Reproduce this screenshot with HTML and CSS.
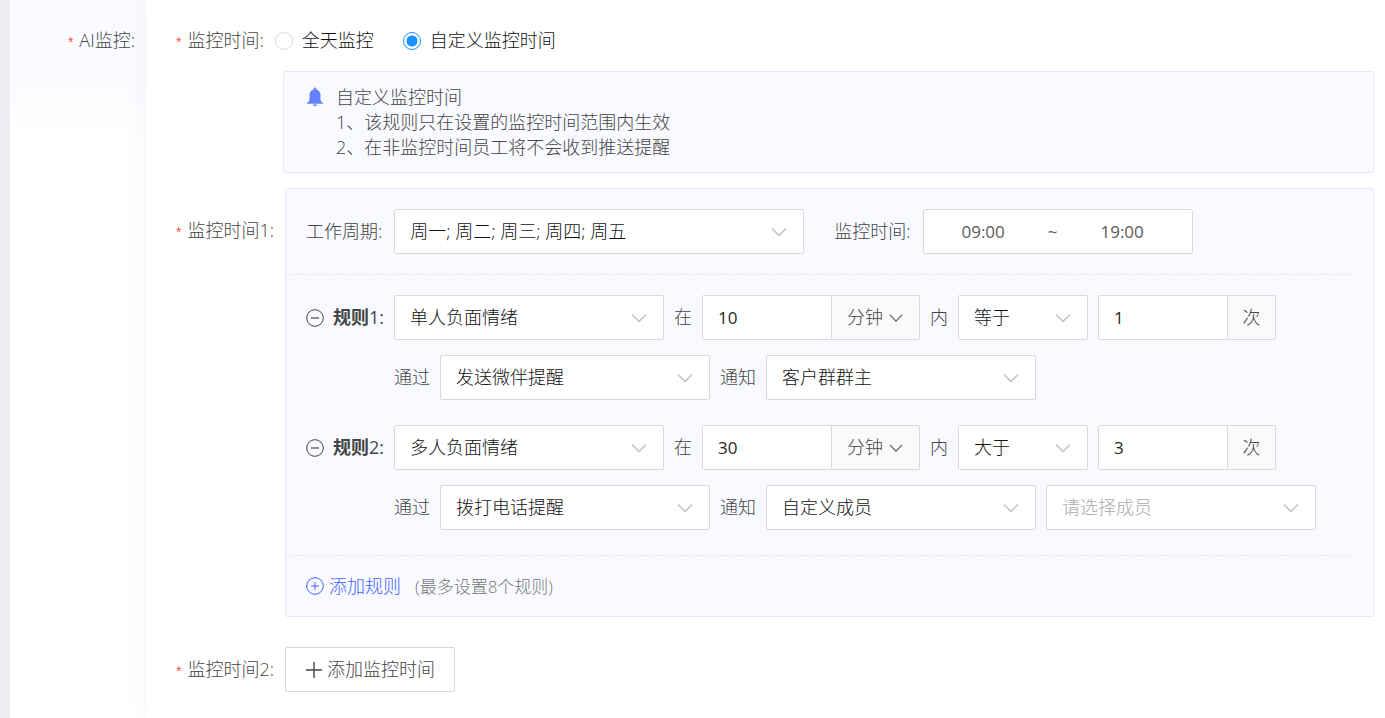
FILE: index.html
```html
<!DOCTYPE html>
<html lang="zh-CN">
<head>
<meta charset="utf-8">
<meta name="viewport" content="width=device-width, initial-scale=1">
<title>AI监控</title>
<link rel="stylesheet" href="styles.css">
</head>
<body>
<svg class="defs" aria-hidden="true">
  <symbol id="chevron" viewBox="0 0 16 10"><path d="M1 1.5l7 7 7-7" fill="none" stroke="currentColor" stroke-width="1.4"/></symbol>
  <symbol id="minus-circle" viewBox="0 0 18 18"><circle cx="9" cy="9" r="8.3" fill="none" stroke="currentColor" stroke-width="1"/><path d="M5 9h8" stroke="currentColor" stroke-width="1.2"/></symbol>
  <symbol id="plus-circle" viewBox="0 0 18 18"><circle cx="9" cy="9" r="8.3" fill="none" stroke="currentColor" stroke-width="1"/><path d="M5 9h8M9 5v8" stroke="currentColor" stroke-width="1"/></symbol>
</svg>
<div class="page">
  <aside class="side">
    <span class="label"><span class="star">*</span>AI监控:</span>
  </aside>
  <main class="card">
    <div class="row row-mode" role="radiogroup" aria-labelledby="mode-label">
      <span class="label" id="mode-label"><span class="star">*</span>监控时间:</span>
      <label class="radio"><input type="radio" name="mode">全天监控</label>
      <label class="radio"><input type="radio" name="mode" checked>自定义监控时间</label>
    </div>

    <section class="notice">
      <svg class="bell" viewBox="0 0 18 20" aria-hidden="true"><path d="M9 0.6c.8 0 1.3.6 1.3 1.3v.5c2.6.7 4.2 2.9 4.2 5.600v4.200c0 1.700.9 2.700 2.500 3.600v.9H1v-.9c1.600-.9 2.500-1.900 2.500-3.600V8c0-2.700 1.600-4.900 4.200-5.600v-.5C7.700 1.200 8.200.6 9 .6zM6.800 17.500h4.400c-.2 1.100-1.100 1.700-2.200 1.700s-2-.6-2.200-1.700z" fill="currentColor"/></svg>
      <div>
        <p>自定义监控时间</p>
        <p>1、该规则只在设置的监控时间范围内生效</p>
        <p>2、在非监控时间员工将不会收到推送提醒</p>
      </div>
    </section>

    <section class="row row-top">
      <span class="label label-control"><span class="star">*</span>监控时间1:</span>
      <div class="panel">
        <div class="period line">
          <label for="week">工作周期:</label>
          <span class="select wide"><select id="week"><option>周一; 周二; 周三; 周四; 周五</option></select><svg><use href="#chevron"/></svg></span>
          <label class="time-label" for="start">监控时间:</label>
          <span class="range"><input id="start" type="text" value="09:00"><span>~</span><input type="text" value="19:00" aria-label="结束时间"></span>
        </div>
        <div class="rules">
          <div class="rule">
            <div class="rule-name"><button class="icon-button" type="button" aria-label="删除规则1"><svg><use href="#minus-circle"/></svg></button><span><strong>规则</strong>1:</span></div>
            <div class="rule-body">
              <div class="line">
                <span class="select"><select aria-label="情绪类型"><option>单人负面情绪</option></select><svg><use href="#chevron"/></svg></span>
                <span>在</span>
                <span class="group"><input type="text" value="10" aria-label="时长"><span class="unit select"><select aria-label="时间单位"><option>分钟</option></select><svg><use href="#chevron"/></svg></span></span>
                <span>内</span>
                <span class="select small"><select aria-label="比较方式"><option>等于</option></select><svg><use href="#chevron"/></svg></span>
                <span class="group"><input type="text" value="1" aria-label="次数"><span class="suffix">次</span></span>
              </div>
              <div class="line">
                <span>通过</span>
                <span class="select"><select aria-label="提醒方式"><option>发送微伴提醒</option></select><svg><use href="#chevron"/></svg></span>
                <span>通知</span>
                <span class="select"><select aria-label="通知对象"><option>客户群群主</option></select><svg><use href="#chevron"/></svg></span>
              </div>
            </div>
          </div>
          <div class="rule">
            <div class="rule-name"><button class="icon-button" type="button" aria-label="删除规则2"><svg><use href="#minus-circle"/></svg></button><span><strong>规则</strong>2:</span></div>
            <div class="rule-body">
              <div class="line">
                <span class="select"><select aria-label="情绪类型"><option>多人负面情绪</option></select><svg><use href="#chevron"/></svg></span>
                <span>在</span>
                <span class="group"><input type="text" value="30" aria-label="时长"><span class="unit select"><select aria-label="时间单位"><option>分钟</option></select><svg><use href="#chevron"/></svg></span></span>
                <span>内</span>
                <span class="select small"><select aria-label="比较方式"><option>大于</option></select><svg><use href="#chevron"/></svg></span>
                <span class="group"><input type="text" value="3" aria-label="次数"><span class="suffix">次</span></span>
              </div>
              <div class="line">
                <span>通过</span>
                <span class="select"><select aria-label="提醒方式"><option>拨打电话提醒</option></select><svg><use href="#chevron"/></svg></span>
                <span>通知</span>
                <span class="select"><select aria-label="通知对象"><option>自定义成员</option></select><svg><use href="#chevron"/></svg></span>
                <span class="select empty"><select aria-label="成员"><option>请选择成员</option></select><svg><use href="#chevron"/></svg></span>
              </div>
            </div>
          </div>
        </div>
        <div class="panel-foot">
          <button class="add-rule" type="button"><svg><use href="#plus-circle"/></svg>添加规则</button>
          <span class="hint">(最多设置8个规则)</span>
        </div>
      </div>
    </section>

    <section class="row row-add">
      <span class="label"><span class="star">*</span>监控时间2:</span>
      <button class="add-time" type="button"><svg viewBox="0 0 18 18" aria-hidden="true"><path d="M9 1v16M1 9h16" stroke="currentColor" stroke-width="1.4"/></svg>添加监控时间</button>
    </section>
  </main>
</div>
</body>
</html>
```

FILE: styles.css
```css
* { box-sizing: border-box; }

body {
  margin: 0;
  font: 300 18px/25px "Open Sans", "Noto Sans CJK SC", sans-serif;
  color: #454545;
  background: #fff;
}

input, select, button { font: inherit; color: inherit; margin: 0; }
p { margin: 0; }
.defs { position: absolute; width: 0; height: 0; }

.page {
  display: flex;
  min-height: 100vh;
  border-left: 10px solid #eeeff4;
}

.side {
  flex: none;
  width: 136px;
  padding: 28px 11px 0 0;
  text-align: right;
  background: linear-gradient(#fafbff, #fafbff 80px, #fff 140px);
}

.card {
  flex: 1;
  min-width: 0;
  padding: 28px 11px 24px 30px;
  background: #fff;
  border-top-left-radius: 8px;
  box-shadow: 0 0 24px rgba(40, 50, 100, 0.05);
}

.row { display: flex; gap: 11px; }
.row-mode { align-items: center; }
.row-top { margin-top: 15px; }
.row-add { margin-top: 30px; align-items: center; }

.label { flex: none; white-space: nowrap; }
.label-control { padding-top: 30px; }
.star { margin-right: 6px; font: 14px/18px "Liberation Sans", sans-serif; color: #ff4d4f; }

.radio { display: flex; align-items: center; gap: 9px; color: #111; }
.radio + .radio { margin-left: 18px; }
.radio input {
  appearance: none;
  width: 18px;
  height: 18px;
  border: 1px solid #d9d9d9;
  border-radius: 50%;
  background: #fff;
}
.radio input:checked {
  border-color: #1890ff;
  background: radial-gradient(circle, #1890ff 5px, #fff 6px);
}

.notice {
  display: flex;
  gap: 12px;
  margin: 18px 0 0 107px;
  padding: 13px 22px 12px;
  border: 1px solid #e6e8fd;
  border-radius: 2px;
  background: #f9faff;
}
.bell { flex: none; width: 18px; height: 20px; margin-top: 2px; color: #6681fe; }

.panel {
  flex: 1;
  min-width: 0;
  border: 1px solid #e6e8fd;
  border-radius: 2px;
  background: #f9faff;
}

.line { display: flex; align-items: center; gap: 10px; white-space: nowrap; }

.period, .rules {
  margin-right: 20px;
  border-bottom: 1px dashed #e8e8e8;
}
.period { gap: 12px; padding: 20px 0 20px 20px; }
.time-label { margin-left: 18px; }

.rules { display: grid; gap: 25px; padding: 20px 0 25px 20px; }
.rule { display: flex; gap: 10px; }
.rule-name { display: flex; align-items: center; gap: 9px; height: 45px; font-weight: 400; }
.rule-name strong { font-weight: 700; }
.rule-body { display: grid; gap: 15px; }

.icon-button { display: flex; padding: 0; border: 0; background: none; cursor: pointer; }
.icon-button svg, .add-rule svg, .add-time svg { width: 18px; height: 18px; }

.select { position: relative; display: flex; width: 270px; height: 45px; }
.select select {
  appearance: none;
  width: 100%;
  padding: 0 40px 0 15px;
  border: 1px solid #d9d9d9;
  border-radius: 2px;
  background: #fff;
  color: #111;
}
.select svg {
  position: absolute;
  right: 17px;
  top: 18px;
  width: 16px;
  height: 10px;
  color: #bfbfbf;
  pointer-events: none;
}
.wide { width: 410px; }
.small { width: 130px; }
.empty select { color: #aaa; }

.group { display: flex; height: 45px; }
.group input {
  width: 130px;
  padding: 0 15px;
  border: 1px solid #d9d9d9;
  border-radius: 2px 0 0 2px;
  background: #fff;
  color: #262626;
  font-size: 17px;
  font-weight: 400;
}
.unit { width: 88px; }
.unit select {
  padding: 0 30px 0 15px;
  border-left: 0;
  border-radius: 0 2px 2px 0;
  background: #fafafa;
  color: #454545;
}
.unit svg { width: 14px; color: #595959; }
.suffix {
  width: 48px;
  line-height: 43px;
  text-align: center;
  border: 1px solid #d9d9d9;
  border-left: 0;
  border-radius: 0 2px 2px 0;
  background: #fafafa;
}

.range {
  display: flex;
  align-items: center;
  width: 270px;
  height: 45px;
  padding-right: 10px;
  border: 1px solid #d9d9d9;
  border-radius: 2px;
  background: #fff;
  color: #595959;
  font-size: 17px;
  font-weight: 400;
}
.range input {
  flex: 1;
  min-width: 0;
  padding: 0;
  border: 0;
  background: none;
  text-align: center;
}
.range span { width: 20px; text-align: center; }

.panel-foot { display: flex; align-items: center; gap: 10px; height: 60px; padding-left: 20px; }
.add-rule {
  display: flex;
  align-items: center;
  gap: 5px;
  padding: 0;
  border: 0;
  background: none;
  color: #3d5fff;
  cursor: pointer;
}
.hint { margin-left: 4px; font-size: 17px; color: #777; }

.add-time {
  display: flex;
  align-items: center;
  gap: 4px;
  height: 45px;
  padding: 0 19px;
  border: 1px solid #d9d9d9;
  border-radius: 2px;
  background: #fff;
  cursor: pointer;
}
```
